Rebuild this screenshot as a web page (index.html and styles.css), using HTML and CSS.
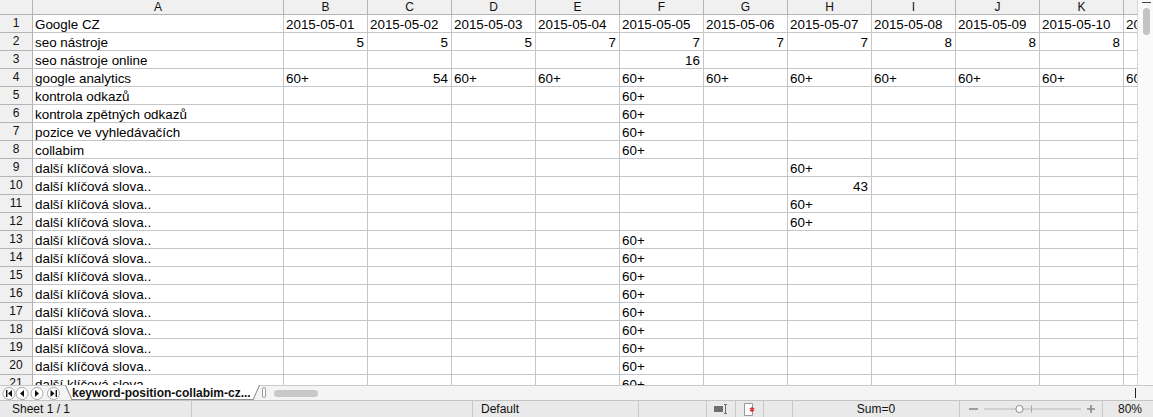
FILE: index.html
```html
<html>
    <head>
        <link rel="stylesheet" href="styles.css">
    </head>
    <body>
        <div id="sheet">
            <div id="grid">
                <div class="row head">
                    <div class="corner"></div><div class="ch">A</div><div class="ch">B</div><div class="ch">C</div><div class="ch">D</div><div class="ch">E</div><div class="ch">F</div><div class="ch">G</div><div class="ch">H</div><div class="ch">I</div><div class="ch">J</div><div class="ch">K</div><div class="ch">L</div>
                </div>
                <div class="row">
                    <div class="rh">1</div><div class="c">Google CZ</div><div class="c">2015-05-01</div><div class="c">2015-05-02</div><div class="c">2015-05-03</div><div class="c">2015-05-04</div><div class="c">2015-05-05</div><div class="c">2015-05-06</div><div class="c">2015-05-07</div><div class="c">2015-05-08</div><div class="c">2015-05-09</div><div class="c">2015-05-10</div><div class="c">2015-05-11</div>
                </div>
                <div class="row">
                    <div class="rh">2</div><div class="c">seo nástroje</div><div class="c n">5</div><div class="c n">5</div><div class="c n">5</div><div class="c n">7</div><div class="c n">7</div><div class="c n">7</div><div class="c n">7</div><div class="c n">8</div><div class="c n">8</div><div class="c n">8</div><div class="c"></div>
                </div>
                <div class="row">
                    <div class="rh">3</div><div class="c">seo nástroje online</div><div class="c"></div><div class="c"></div><div class="c"></div><div class="c"></div><div class="c n">16</div><div class="c"></div><div class="c"></div><div class="c"></div><div class="c"></div><div class="c"></div><div class="c"></div>
                </div>
                <div class="row">
                    <div class="rh">4</div><div class="c">google analytics</div><div class="c">60+</div><div class="c n">54</div><div class="c">60+</div><div class="c">60+</div><div class="c">60+</div><div class="c">60+</div><div class="c">60+</div><div class="c">60+</div><div class="c">60+</div><div class="c">60+</div><div class="c">60+</div>
                </div>
                <div class="row">
                    <div class="rh">5</div><div class="c">kontrola odkazů</div><div class="c"></div><div class="c"></div><div class="c"></div><div class="c"></div><div class="c">60+</div><div class="c"></div><div class="c"></div><div class="c"></div><div class="c"></div><div class="c"></div><div class="c"></div>
                </div>
                <div class="row">
                    <div class="rh">6</div><div class="c">kontrola zpětných odkazů</div><div class="c"></div><div class="c"></div><div class="c"></div><div class="c"></div><div class="c">60+</div><div class="c"></div><div class="c"></div><div class="c"></div><div class="c"></div><div class="c"></div><div class="c"></div>
                </div>
                <div class="row">
                    <div class="rh">7</div><div class="c">pozice ve vyhledávačích</div><div class="c"></div><div class="c"></div><div class="c"></div><div class="c"></div><div class="c">60+</div><div class="c"></div><div class="c"></div><div class="c"></div><div class="c"></div><div class="c"></div><div class="c"></div>
                </div>
                <div class="row">
                    <div class="rh">8</div><div class="c">collabim</div><div class="c"></div><div class="c"></div><div class="c"></div><div class="c"></div><div class="c">60+</div><div class="c"></div><div class="c"></div><div class="c"></div><div class="c"></div><div class="c"></div><div class="c"></div>
                </div>
                <div class="row">
                    <div class="rh">9</div><div class="c">další klíčová slova..</div><div class="c"></div><div class="c"></div><div class="c"></div><div class="c"></div><div class="c"></div><div class="c"></div><div class="c">60+</div><div class="c"></div><div class="c"></div><div class="c"></div><div class="c"></div>
                </div>
                <div class="row">
                    <div class="rh">10</div><div class="c">další klíčová slova..</div><div class="c"></div><div class="c"></div><div class="c"></div><div class="c"></div><div class="c"></div><div class="c"></div><div class="c n">43</div><div class="c"></div><div class="c"></div><div class="c"></div><div class="c"></div>
                </div>
                <div class="row">
                    <div class="rh">11</div><div class="c">další klíčová slova..</div><div class="c"></div><div class="c"></div><div class="c"></div><div class="c"></div><div class="c"></div><div class="c"></div><div class="c">60+</div><div class="c"></div><div class="c"></div><div class="c"></div><div class="c"></div>
                </div>
                <div class="row">
                    <div class="rh">12</div><div class="c">další klíčová slova..</div><div class="c"></div><div class="c"></div><div class="c"></div><div class="c"></div><div class="c"></div><div class="c"></div><div class="c">60+</div><div class="c"></div><div class="c"></div><div class="c"></div><div class="c"></div>
                </div>
                <div class="row">
                    <div class="rh">13</div><div class="c">další klíčová slova..</div><div class="c"></div><div class="c"></div><div class="c"></div><div class="c"></div><div class="c">60+</div><div class="c"></div><div class="c"></div><div class="c"></div><div class="c"></div><div class="c"></div><div class="c"></div>
                </div>
                <div class="row">
                    <div class="rh">14</div><div class="c">další klíčová slova..</div><div class="c"></div><div class="c"></div><div class="c"></div><div class="c"></div><div class="c">60+</div><div class="c"></div><div class="c"></div><div class="c"></div><div class="c"></div><div class="c"></div><div class="c"></div>
                </div>
                <div class="row">
                    <div class="rh">15</div><div class="c">další klíčová slova..</div><div class="c"></div><div class="c"></div><div class="c"></div><div class="c"></div><div class="c">60+</div><div class="c"></div><div class="c"></div><div class="c"></div><div class="c"></div><div class="c"></div><div class="c"></div>
                </div>
                <div class="row">
                    <div class="rh">16</div><div class="c">další klíčová slova..</div><div class="c"></div><div class="c"></div><div class="c"></div><div class="c"></div><div class="c">60+</div><div class="c"></div><div class="c"></div><div class="c"></div><div class="c"></div><div class="c"></div><div class="c"></div>
                </div>
                <div class="row">
                    <div class="rh">17</div><div class="c">další klíčová slova..</div><div class="c"></div><div class="c"></div><div class="c"></div><div class="c"></div><div class="c">60+</div><div class="c"></div><div class="c"></div><div class="c"></div><div class="c"></div><div class="c"></div><div class="c"></div>
                </div>
                <div class="row">
                    <div class="rh">18</div><div class="c">další klíčová slova..</div><div class="c"></div><div class="c"></div><div class="c"></div><div class="c"></div><div class="c">60+</div><div class="c"></div><div class="c"></div><div class="c"></div><div class="c"></div><div class="c"></div><div class="c"></div>
                </div>
                <div class="row">
                    <div class="rh">19</div><div class="c">další klíčová slova..</div><div class="c"></div><div class="c"></div><div class="c"></div><div class="c"></div><div class="c">60+</div><div class="c"></div><div class="c"></div><div class="c"></div><div class="c"></div><div class="c"></div><div class="c"></div>
                </div>
                <div class="row">
                    <div class="rh">20</div><div class="c">další klíčová slova..</div><div class="c"></div><div class="c"></div><div class="c"></div><div class="c"></div><div class="c">60+</div><div class="c"></div><div class="c"></div><div class="c"></div><div class="c"></div><div class="c"></div><div class="c"></div>
                </div>
                <div class="row">
                    <div class="rh">21</div><div class="c">další klíčová slova..</div><div class="c"></div><div class="c"></div><div class="c"></div><div class="c"></div><div class="c">60+</div><div class="c"></div><div class="c"></div><div class="c"></div><div class="c"></div><div class="c"></div><div class="c"></div>
                </div>
            </div>
            <div id="vscroll">
                <div class="vcap"></div>
                <div class="vthumb"></div>
            </div>
        </div>

        <div id="tabbar">
            <div class="navs">
                <svg width="62" height="15" viewBox="0 0 62 15">
                    <g fill="#fff" stroke="#a9a9a9">
                        <circle cx="8" cy="7.5" r="6"/>
                        <circle cx="21" cy="7.5" r="6"/>
                        <circle cx="36" cy="7.5" r="6"/>
                        <circle cx="52.5" cy="7.5" r="6"/>
                    </g>
                    <g fill="#111">
                        <rect x="5" y="4" width="1.4" height="7"/>
                        <path d="M11 4 L7 7.5 L11 11 Z"/>
                        <path d="M23 4 L19 7.5 L23 11 Z"/>
                        <path d="M34 4 L38 7.5 L34 11 Z"/>
                        <path d="M49.5 4 L53.5 7.5 L49.5 11 Z"/>
                        <rect x="54.6" y="4" width="1.4" height="7"/>
                    </g>
                </svg>
            </div>
            <div class="tab">
                <svg class="tabshape" viewBox="0 0 100 15" preserveAspectRatio="none">
                    <polygon points="0,-1 100,-1 96.5,14.5 3.5,14.5" fill="#fff" stroke="#8c8c8c" vector-effect="non-scaling-stroke"/>
                </svg>
                <span class="tabtext">keyword-position-collabim-cz...</span>
            </div>
            <div class="splitter"></div>
            <div class="htrack">
                <div class="hthumb"></div>
            </div>
            <div class="hend"></div>
        </div>

        <div id="status">
            <div class="sec s1">Sheet 1 / 1</div>
            <div class="sec s2"></div>
            <div class="sec s3">Default</div>
            <div class="sec s4"></div>
            <div class="sec s5">
                <svg width="14" height="10" viewBox="0 0 14 10">
                    <rect x="0" y="2" width="9" height="6" fill="#6e6e6e"/>
                    <path d="M11.5 0.5 V9.5 M10 0.5 H13 M10 9.5 H13" stroke="#6e6e6e" fill="none"/>
                </svg>
            </div>
            <div class="sec s6">
                <svg width="12" height="13" viewBox="0 0 12 13">
                    <path d="M0.5 0.5 H8.5 V12.5 H0.5 Z" fill="#fff" stroke="#9a9a9a"/>
                    <path d="M8 4 V9 M5.8 5.2 L10.2 7.8 M10.2 5.2 L5.8 7.8" stroke="#d22" stroke-width="1.2"/>
                </svg>
            </div>
            <div class="sec s7"></div>
            <div class="sec s8">Sum=0</div>
            <div class="sec s9">
                <svg width="142" height="12" viewBox="0 0 142 12">
                    <path d="M9 6 H18" stroke="#8a8a8a" stroke-width="1.6"/>
                    <path d="M24 6 H121" stroke="#b9b9b9"/>
                    <path d="M71.5 2.5 V9.5" stroke="#a8a8a8"/>
                    <circle cx="59.5" cy="6" r="3.6" fill="#fff" stroke="#8a8a8a"/>
                    <path d="M127 6 H135 M131 2 V10" stroke="#8a8a8a" stroke-width="1.6"/>
                </svg>
            </div>
            <div class="sec s10">80%</div>
        </div>
    </body>
</html>
```

FILE: styles.css
```css
html, body {
    margin: 0;
    padding: 0;
}
body {
    width: 1153px;
    height: 417px;
    overflow: hidden;
    background: #ffffff;
    font-family: "Liberation Sans", Arial, sans-serif;
    color: #000;
}

/* sheet area */
#sheet {
    display: flex;
    height: 385px;
}
#grid {
    width: 1137px;
    overflow: hidden;
}
.row {
    display: grid;
    grid-template-columns: 33px 251px repeat(11, 84px);
    height: 18px;
}
.row.head {
    height: 15px;
}
.c, .rh, .ch, .corner {
    box-sizing: border-box;
    border-right: 1px solid #c6c6c6;
    border-bottom: 1px solid #c6c6c6;
    white-space: nowrap;
    overflow: hidden;
}
.c {
    font-size: 13.4px;
    line-height: 15px;
    padding: 2px 3px 0 2px;
}
.c.n {
    text-align: right;
}
.rh, .ch, .corner {
    background: #f0f0f0;
    border-color: #b4b4b4;
    font-size: 12px;
    text-align: center;
    color: #111;
}
.rh {
    line-height: 17px;
}
.ch {
    line-height: 14px;
}

#vscroll {
    width: 16px;
    box-sizing: border-box;
    border-left: 1px solid #d6d6d6;
    background: #fafafa;
    display: flex;
    flex-direction: column;
    align-items: center;
}
.vcap {
    width: 9px;
    height: 1px;
    background: #444;
    margin-top: 2px;
    margin-left: 2px;
}
.vthumb {
    width: 7px;
    height: 27px;
    margin-top: 5px;
    margin-left: 1px;
    border-radius: 4px;
    background: #c3c3c3;
}

/* sheet tabs */
#tabbar {
    display: flex;
    align-items: stretch;
    height: 15px;
    box-sizing: border-box;
    border-top: 1px solid #c9c9c9;
    background: #f4f4f4;
}
.navs {
    width: 64px;
    flex: none;
    display: flex;
    align-items: center;
    padding-left: 1px;
}
.navs svg {
    display: block;
}
.tab {
    position: relative;
    flex: none;
    width: 195px;
    height: 15px;
    margin-top: -1px;
    display: flex;
    align-items: center;
    overflow: hidden;
}
.tabshape {
    position: absolute;
    left: 0;
    top: 0;
    width: 100%;
    height: 15px;
}
.tabtext {
    position: relative;
    white-space: nowrap;
    font-size: 12px;
    font-weight: bold;
    color: #111;
    line-height: 14px;
    padding-left: 7px;
}
.splitter {
    flex: none;
    width: 4px;
    height: 11px;
    margin: 1px 5px 0 2px;
    box-sizing: border-box;
    border: 1px solid #9c9c9c;
    border-radius: 2px;
    background: #fff;
}
.htrack {
    flex: 1;
    display: flex;
    align-items: center;
    padding-left: 3px;
}
.hthumb {
    width: 44px;
    height: 7px;
    border-radius: 4px;
    background: #c8c8c8;
}
.hend {
    width: 1px;
    height: 10px;
    margin: 2px 17px 0 0;
    background: #222;
}

/* status bar */
#status {
    display: flex;
    height: 17px;
    box-sizing: border-box;
    border-top: 1px solid #c4c4c4;
    background: #e9e9e9;
    font-size: 12px;
    line-height: 16px;
    color: #111;
}
.sec {
    box-sizing: border-box;
    border-left: 1px solid #c9c9c9;
    white-space: nowrap;
    display: flex;
    align-items: center;
}
.s1 {
    width: 191px;
    border-left: none;
    padding-left: 12px;
}
.s2 { width: 281px; }
.s3 { width: 166px; padding-left: 8px; }
.s4 { width: 68px; }
.s5 { width: 29px; justify-content: center; }
.s6 { width: 28px; justify-content: center; }
.s7 { width: 29px; }
.s8 { width: 167px; justify-content: center; }
.s9 { width: 143px; }
.s10 { flex: 1; padding-left: 15px; }
```
